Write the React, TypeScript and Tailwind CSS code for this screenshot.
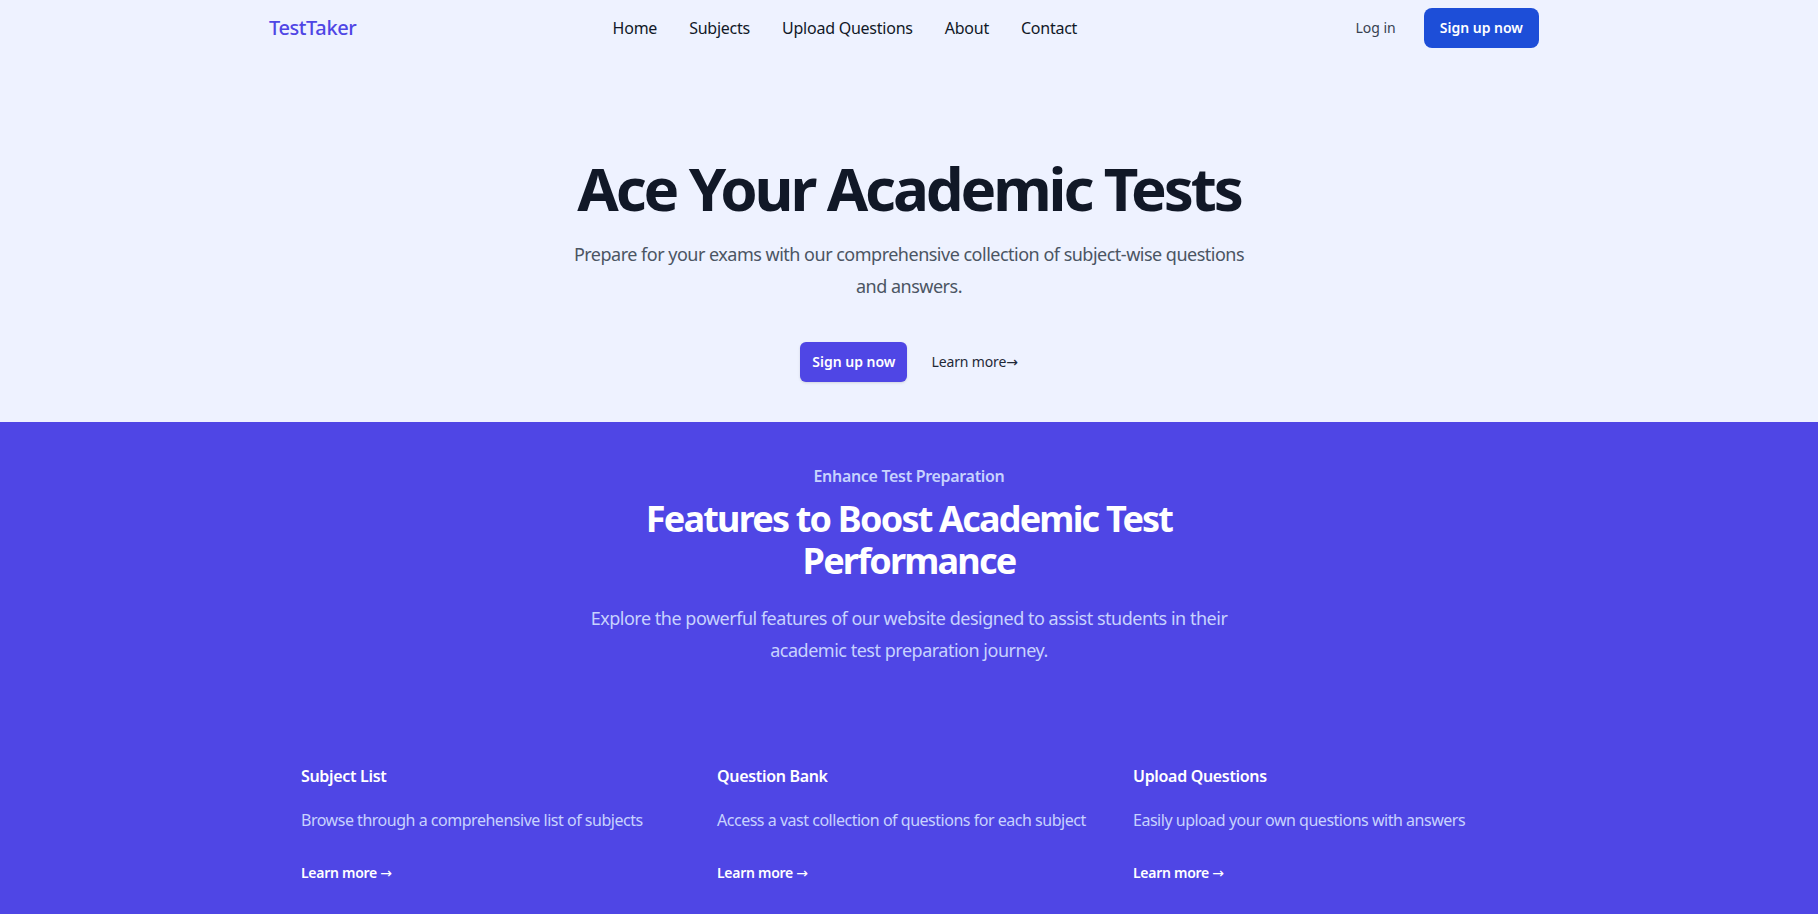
import React from 'react';

const navLinks = ['Home', 'Subjects', 'Upload Questions', 'About', 'Contact'];

const features = [
  { name: 'Subject List', description: 'Browse through a comprehensive list of subjects' },
  { name: 'Question Bank', description: 'Access a vast collection of questions for each subject' },
  { name: 'Upload Questions', description: 'Easily upload your own questions with answers' },
];

function Arrow() {
  return <span className="font-['DejaVu_Sans',sans-serif] font-normal">→</span>;
}

function Header() {
  return (
    <header>
      <nav className="mx-auto flex h-14 max-w-7xl items-center justify-between pr-[10px]">
        <a href="#" className="text-xl font-medium tracking-[-0.02em] text-[#4f46e5]">TestTaker</a>
        <div className="mr-[22px] flex gap-x-8">
          {navLinks.map((link) => (
            <a key={link} href="#" className="text-base tracking-[-0.015em] text-[#111827]">{link}</a>
          ))}
        </div>
        <div className="flex items-center gap-x-7">
          <a href="#" className="text-sm text-[#374151]">Log in</a>
          <a href="#" className="flex h-10 items-center rounded-lg bg-[#1d4ed8] px-4 text-sm font-semibold text-white">
            Sign up now
          </a>
        </div>
      </nav>
    </header>
  );
}

function Hero() {
  return (
    <div className="px-8 pb-10 pt-[102px] text-center">
      <h1 className="text-6xl font-bold tracking-[-0.052em] text-[#111827]">Ace Your Academic Tests</h1>
      <p className="mx-auto mt-5 max-w-3xl text-lg leading-8 tracking-[-0.028em] text-[#4b5563]">
        Prepare for your exams with our comprehensive collection of subject-wise questions
        <br />
        and answers.
      </p>
      <div className="mt-10 flex items-center justify-center gap-x-6">
        <a href="#" className="rounded-md bg-[#4f46e5] px-3 py-2.5 text-sm font-semibold text-white shadow-sm">
          Sign up now
        </a>
        <a href="#" className="text-sm leading-6 tracking-[-0.01em] text-[#1f2937]">
          Learn more<Arrow />
        </a>
      </div>
    </div>
  );
}

function Features() {
  return (
    <div className="bg-[#4f46e5] pb-24 pt-10">
      <div className="mx-auto max-w-7xl px-8">
        <div className="mx-auto max-w-3xl text-center">
          <h2 className="text-base font-semibold leading-7 tracking-[-0.02em] text-[#c7d2fe]">Enhance Test Preparation</h2>
          <h3 className="mt-2 text-4xl font-bold tracking-[-0.05em] text-white">
            <span className="block leading-[42px]">Features to Boost Academic Test</span>
            <span className="block leading-[42px]">Performance</span>
          </h3>
          <p className="mt-5 text-lg leading-8 tracking-[-0.027em] text-[#c7d2fe]">
            Explore the powerful features of our website designed to assist students in their
            <br />
            academic test preparation journey.
          </p>
        </div>
        <dl className="mt-24 grid grid-cols-3 gap-x-8">
          {features.map((f) => (
            <div key={f.name} className="flex flex-col">
              <dt className="text-base font-semibold leading-7 tracking-[-0.02em] text-white">{f.name}</dt>
              <dd className="mt-4 flex flex-auto flex-col text-base leading-7 text-[#c7d2fe]">
                <p className="flex-auto whitespace-nowrap tracking-[-0.03em]">{f.description}</p>
                <p className="mt-6">
                  <a href="#" className="text-sm font-semibold leading-6 tracking-[-0.02em] text-white">
                    Learn more <Arrow />
                  </a>
                </p>
              </dd>
            </div>
          ))}
        </dl>
      </div>
    </div>
  );
}

export default function App() {
  return (
    <div className="min-h-screen bg-white font-['Noto_Sans',sans-serif]">
      <div className="bg-[#eef2ff]">
        <Header />
        <Hero />
      </div>
      <Features />
    </div>
  );
}
